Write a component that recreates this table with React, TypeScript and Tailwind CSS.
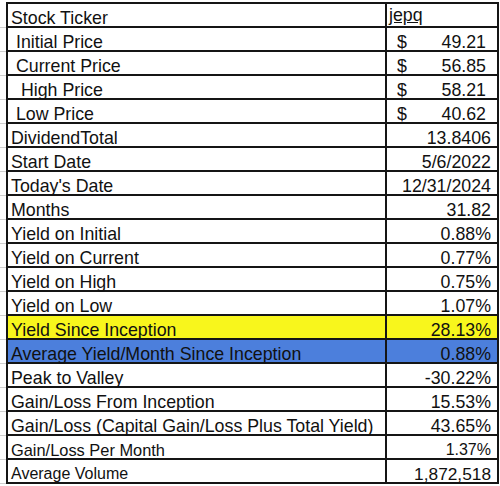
import React from 'react';

type Row = {
  label: string;
  value: string;
  dollar?: boolean;
  fill?: string;
  labelSize?: string;
  valueSize?: string;
  link?: boolean;
};

const rows: Row[] = [
  { label: 'Stock Ticker', value: 'jepq', link: true },
  { label: ' Initial Price', value: '49.21', dollar: true },
  { label: ' Current Price', value: '56.85', dollar: true },
  { label: '  High Price', value: '58.21', dollar: true },
  { label: ' Low Price', value: '40.62', dollar: true },
  { label: 'DividendTotal', value: '13.8406' },
  { label: 'Start Date', value: '5/6/2022' },
  { label: "Today's Date", value: '12/31/2024' },
  { label: 'Months', value: '31.82' },
  { label: 'Yield on Initial', value: '0.88%' },
  { label: 'Yield on Current', value: '0.77%' },
  { label: 'Yield on High', value: '0.75%' },
  { label: 'Yield on Low', value: '1.07%' },
  { label: 'Yield Since Inception', value: '28.13%', fill: 'bg-[#f8f61c]' },
  { label: 'Average Yield/Month Since Inception', value: '0.88%', fill: 'bg-[#4c7fdc]' },
  { label: 'Peak to Valley', value: '-30.22%' },
  { label: 'Gain/Loss From Inception', value: '15.53%' },
  { label: 'Gain/Loss (Capital Gain/Loss Plus Total Yield)', value: '43.65%' },
  { label: 'Gain/Loss Per Month', value: '1.37%', labelSize: 'text-[16.4px]', valueSize: 'text-[16px]' },
  { label: 'Average Volume', value: '1,872,518', labelSize: 'text-[16px]', valueSize: 'text-[17.3px]' },
];

export default function App() {
  return (
    <div className="w-[500px] h-[486px] bg-white pt-[2px] text-[#111] font-['Liberation_Sans',Arial,sans-serif]">
      {/* top edge of the table */}
      <div className="flex h-[2px]">
        <div className="w-[6px]" />
        <div className="w-[493px] bg-[#151515]" />
      </div>
      {rows.map((r) => (
        <div key={r.label} className="flex h-6">
          {/* sheet gridlines outside the table */}
          <div className="w-[6px] border-b border-[#cfcfcf]" />
          <div className={`flex w-[493px] border-x-2 border-b-2 border-[#151515] ${r.fill ?? ''}`}>
            <div
              className={`flex w-[379px] items-end whitespace-pre border-r-2 border-[#151515] pl-[3px] leading-[16px] ${r.labelSize ?? 'text-[17.8px]'}`}
            >
              {r.label}
            </div>
            {r.dollar ? (
              <div className="flex flex-1 items-end justify-between pl-[10px] pr-[11px] text-[17.8px] leading-[16px]">
                <span>$</span>
                <span>{r.value}</span>
              </div>
            ) : r.link ? (
              <div className="flex flex-1 items-end pb-[3px] pl-[2px] text-[17.8px] leading-[16px]">
                <span className="underline underline-offset-[1px]">{r.value}</span>
              </div>
            ) : (
              <div
                className={`flex flex-1 items-end justify-end pr-[6px] leading-[16px] ${r.valueSize ?? 'text-[17.8px]'}`}
              >
                {r.value}
              </div>
            )}
          </div>
        </div>
      ))}
    </div>
  );
}
